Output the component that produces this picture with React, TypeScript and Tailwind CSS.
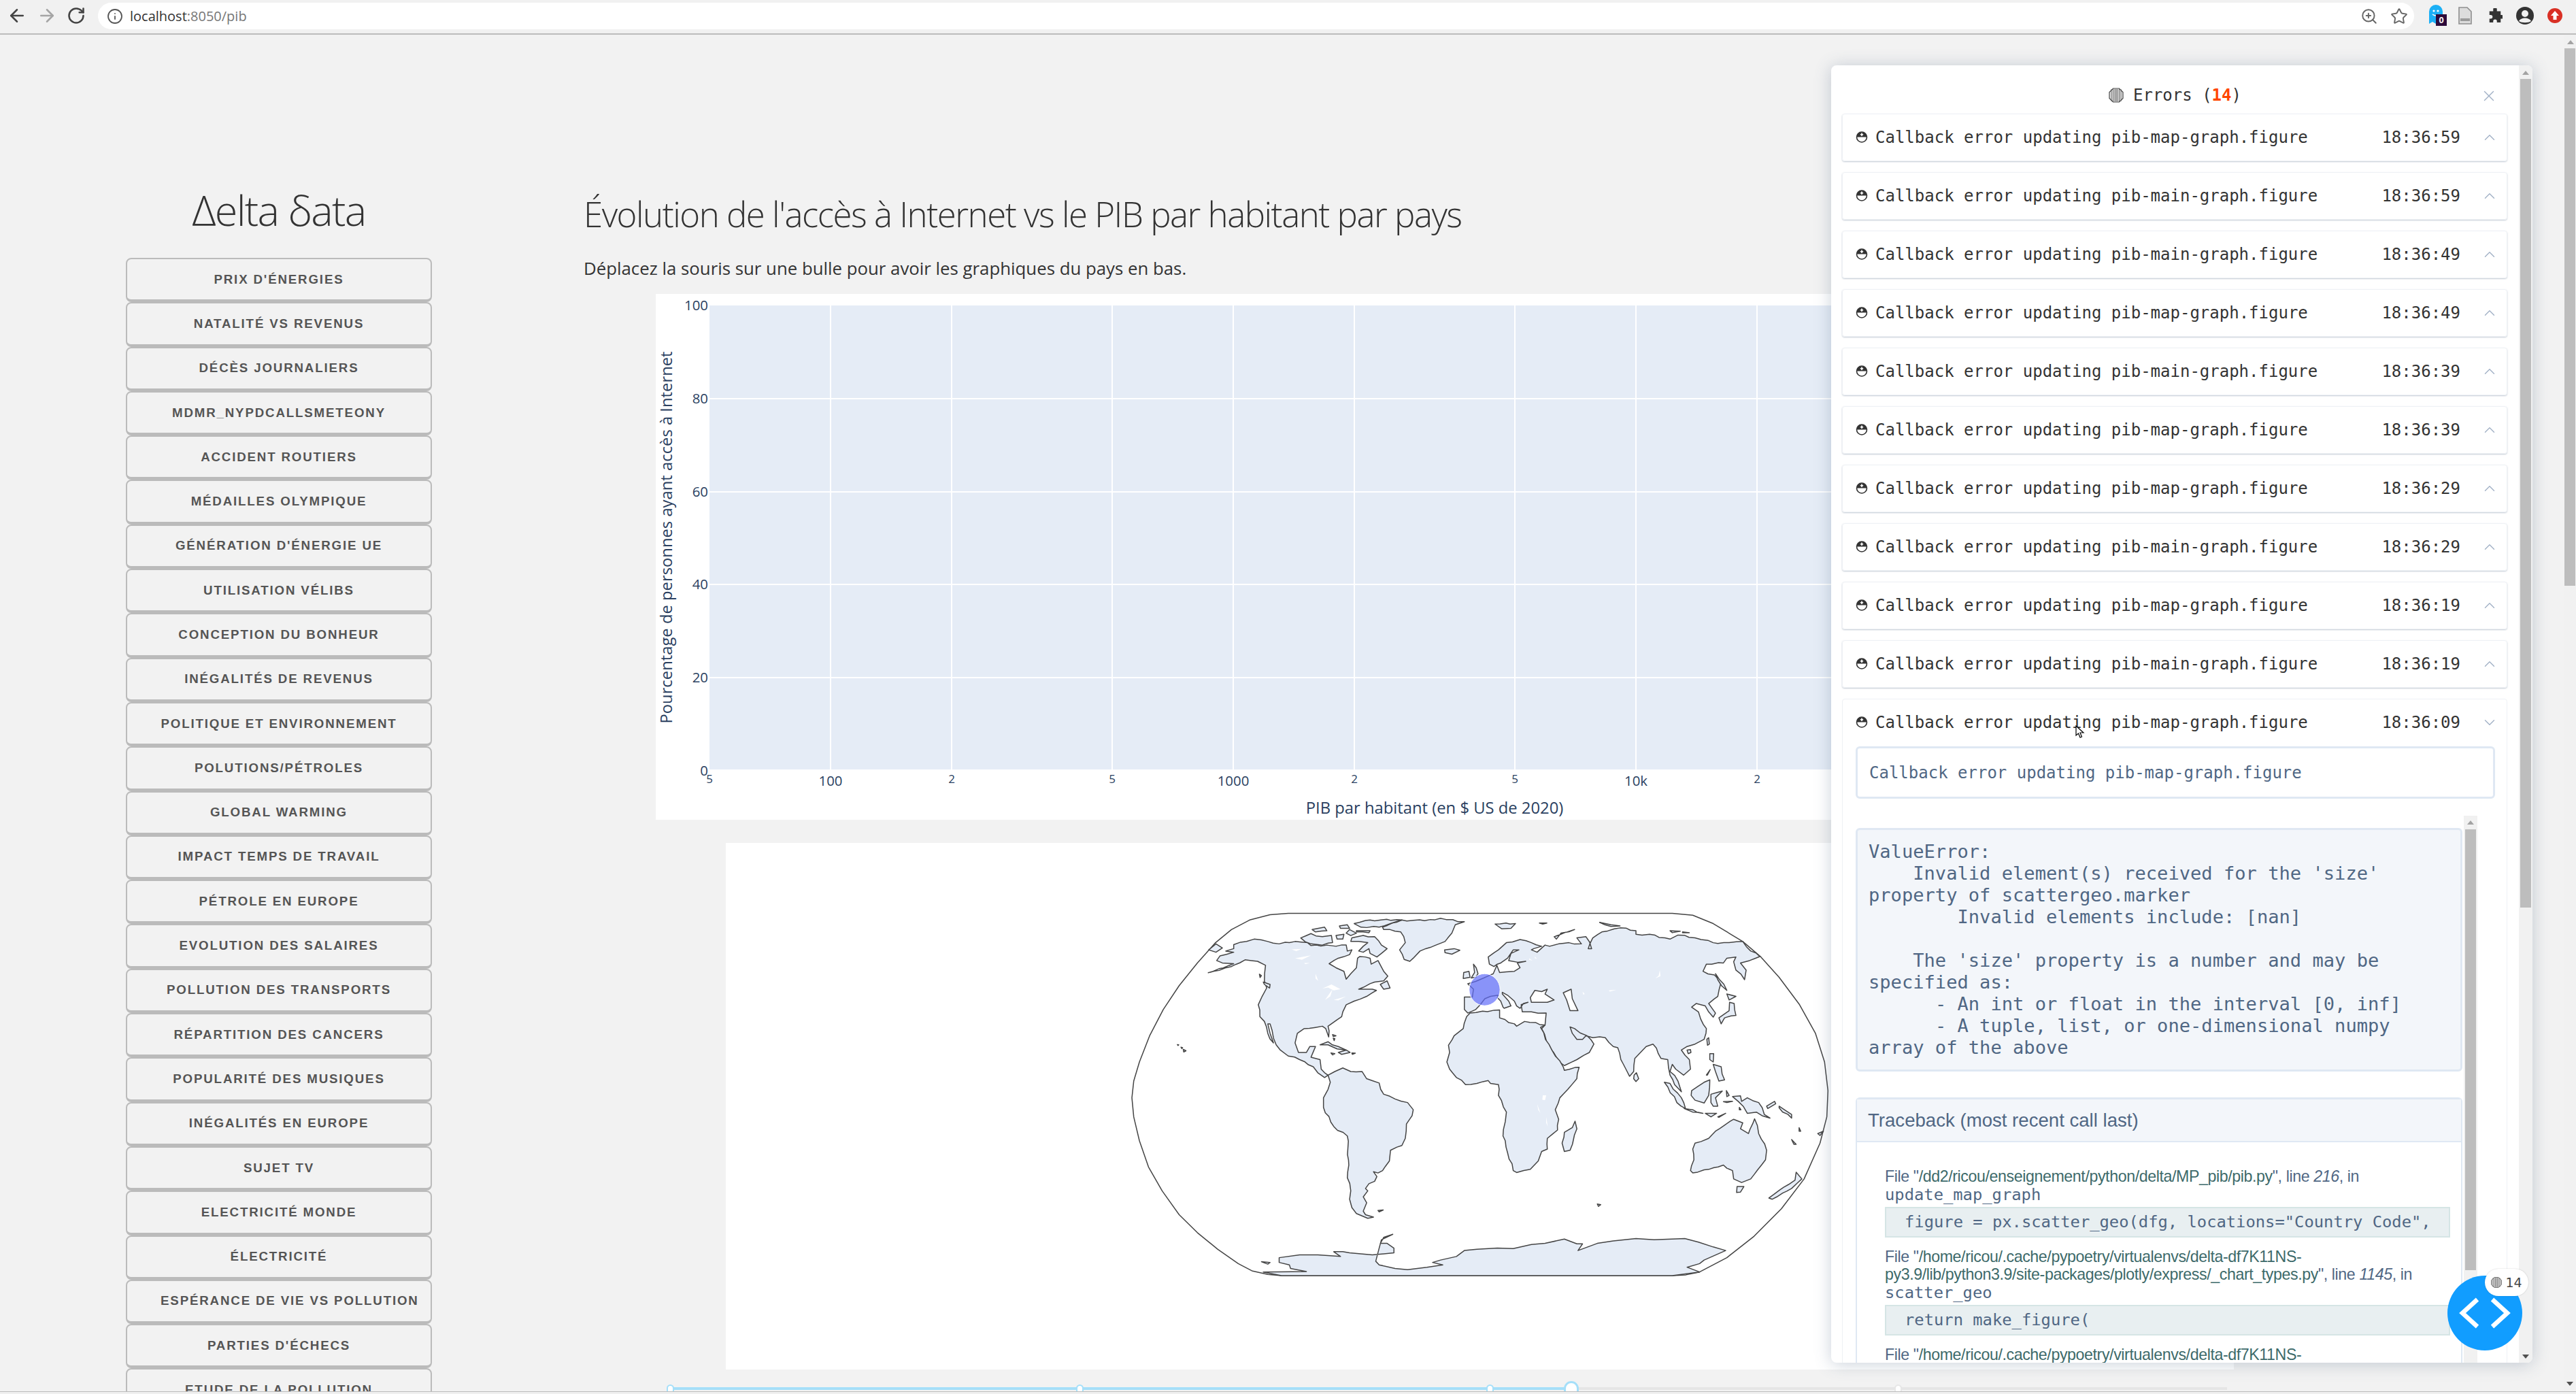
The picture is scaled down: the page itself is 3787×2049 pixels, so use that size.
import { ArrowLeft, ArrowRight, RotateCw, Info, ZoomIn, Star, ChevronUp, ChevronDown, X } from 'lucide-react';

const BOUTONS = [
  "PRIX D'ÉNERGIES", 'NATALITÉ VS REVENUS', 'DÉCÈS JOURNALIERS', 'MDMR_NYPDCALLSMETEONY', 'ACCIDENT ROUTIERS',
  'MÉDAILLES OLYMPIQUE', "GÉNÉRATION D'ÉNERGIE UE", 'UTILISATION VÉLIBS', 'CONCEPTION DU BONHEUR', 'INÉGALITÉS DE REVENUS',
  'POLITIQUE ET ENVIRONNEMENT', 'POLUTIONS/PÉTROLES', 'GLOBAL WARMING', 'IMPACT TEMPS DE TRAVAIL', 'PÉTROLE EN EUROPE',
  'EVOLUTION DES SALAIRES', 'POLLUTION DES TRANSPORTS', 'RÉPARTITION DES CANCERS', 'POPULARITÉ DES MUSIQUES', 'INÉGALITÉS EN EUROPE',
  'SUJET TV', 'ELECTRICITÉ MONDE', 'ÉLECTRICITÉ', 'ESPÉRANCE DE VIE VS POLLUTION', "PARTIES D'ÉCHECS", 'ETUDE DE LA POLLUTION',
];

const ERREURS = [
  ['map', '18:36:59'], ['main', '18:36:59'], ['main', '18:36:49'], ['map', '18:36:49'], ['main', '18:36:39'],
  ['map', '18:36:39'], ['map', '18:36:29'], ['main', '18:36:29'], ['map', '18:36:19'], ['main', '18:36:19'],
];

// le tracé de la carte : coordonnées de la moitié droite décalées de 1560
const d = (s: string) =>
  s.trim().split(/\s+/).map((p) => {
    const [x, y] = p.split(',');
    return `${Number(x) + 1560},${y}`;
  }).join(' ');

// casse les longs segments pour donner une côte irrégulière (toujours le même résultat)
const cote = (s: string) => {
  const pts = s.trim().split(/\s+/).map((p) => p.split(',').map(Number));
  const out: string[] = [];
  pts.forEach(([x, y], i) => {
    const [nx, ny] = pts[(i + 1) % pts.length];
    out.push(`${x},${y}`);
    const n = Math.floor(Math.hypot(nx - x, ny - y) / 22);
    for (let k = 1; k < n; k++) {
      const t = k / n;
      const g = ((k * 7 + i * 3) % 5) - 2;
      out.push(`${(x + (nx - x) * t + g * 1.6).toFixed(1)},${(y + (ny - y) * t - g * 1.6).toFixed(1)}`);
    }
  });
  return out.join(' ');
};

const TERRES_G = [
  '490,158 520,148 580,135 640,145 690,155 760,145 815,150 830,162 900,160 940,165 985,160 990,185 1010,180 1000,200 950,215 910,238 940,255 975,270 985,303 1005,280 1030,255 1035,215 1045,208 1090,215 1095,240 1125,225 1150,270 1168,290 1150,310 1110,315 1040,345 1100,345 1118,350 1075,375 1020,395 985,410 970,440 965,460 920,490 905,500 908,545 895,510 880,500 850,505 800,510 770,530 760,570 775,610 810,610 825,585 850,585 830,630 870,640 875,680 890,695 905,705 890,715 860,695 840,670 780,640 730,625 695,600 665,550 650,490 640,490 650,530 665,570 640,530 625,480 605,460 598,410 615,375 635,340 625,310 630,245 595,228 540,222 480,250 378,276 470,245 490,238 440,235 415,225 430,205 490,190 455,185 490,175',
  '1145,85 1230,55 1330,58 1400,48 1505,62 1465,75 1450,110 1420,145 1380,160 1310,185 1280,215 1265,228 1240,220 1220,180 1245,150 1225,105 1150,95',
  '1418,180 1460,175 1485,182 1450,198 1420,192',
  '1010,130 1060,120 1110,125 1140,160 1165,175 1140,195 1120,210 1090,195 1085,175 1060,190 1040,185 1060,165 1080,150 1040,145 1005,145',
  '785,130 830,112 880,125 920,120 925,150 880,160 830,155',
  '1020,70 1090,55 1230,55 1180,70 1130,85 1050,85',
  '835,95 890,85 900,100 850,105', '955,80 990,75 1000,90 960,90', '1030,100 1090,100 1085,108 1030,105',
  '940,120 975,115 970,135 945,135', '1000,95 1030,110 1005,120 985,110', '380,180 412,155 440,172 412,190',
  '1135,325 1165,310 1178,340 1150,345', '870,578 905,565 950,585 985,600 945,595 905,578', '950,610 985,600 1002,610 965,618',
  '918,612 935,615 925,620', '1010,612 1025,613 1012,618', '620,315 650,325 648,340 625,325', '603,282 612,288 606,296',
  '242,577 248,578 245,581', '258,588 265,590 262,594', '268,597 280,603 270,608',
  '925,535 940,540 928,543', '928,550 935,552 932,560',
  '905,705 935,690 970,675 1005,690 1055,690 1075,720 1130,738 1150,785 1200,805 1255,820 1280,850 1275,875 1250,910 1245,970 1230,1000 1180,1020 1175,1065 1145,1105 1125,1115 1105,1110 1120,1130 1110,1150 1085,1160 1070,1180 1080,1190 1060,1215 1075,1240 1060,1275 1070,1290 1105,1300 1080,1305 1030,1285 1010,1260 1000,1225 1005,1190 990,1135 995,1060 990,960 930,920 885,840 885,800 905,765 915,735',
  '1125,1272 1148,1270 1130,1278', '612,1487 650,1490 640,1497',
];

const TERRES_D = [
  // Eurasie
  '-55,378 -20,378 -15,345 -40,322 -5,312 30,298 72,280 88,245 100,275 130,272 165,270 190,255 178,235 215,228 180,232 140,225 150,195 185,180 160,180 135,215 105,235 90,240 75,250 55,240 50,210 95,180 130,150 190,137 240,150 285,165 250,175 240,180 265,190 300,160 320,165 360,155 405,150 460,155 440,130 480,125 505,175 490,175 510,130 550,105 630,88 700,100 700,115 760,115 850,135 885,118 960,130 1040,150 1110,150 1170,145 1205,185 1245,208 1200,225 1160,235 1185,265 1178,305 1140,265 1130,230 1140,210 1100,215 1085,235 1010,240 995,270 1045,285 1075,315 1060,375 1020,405 1050,445 1040,462 1020,440 1005,415 965,405 945,420 975,440 985,470 1010,510 1000,555 960,575 925,585 900,600 935,640 940,680 910,705 875,680 860,660 850,690 885,730 900,775 870,745 850,705 840,640 810,635 775,575 745,585 695,635 690,690 672,710 645,660 620,590 600,585 565,548 510,548 480,540 465,555 440,555 420,530 410,503 430,510 485,540 515,575 495,610 440,640 385,665 350,630 320,590 285,510 300,495 305,445 240,440 200,440 195,410 225,400 205,405 190,425 175,415 165,395 135,370 112,358 112,365 140,395 150,415 120,425 115,420 105,395 90,380 95,370 60,375 35,385 15,410 -5,430 -40,445 -55,430',
  // Afrique
  '-30,445 100,432 100,465 165,490 175,500 210,480 300,495 280,505 330,600 380,670 385,685 450,672 440,720 400,765 365,800 345,850 360,890 355,935 310,970 310,1015 285,1025 270,1065 235,1100 175,1113 160,1105 135,1030 115,960 125,900 130,860 95,790 95,745 60,740 50,728 0,740 -50,745 -90,715 -120,680 -132,650 -120,610 -125,580 -100,540 -60,510 -45,460',
  '-15,240 -3,255 5,280 -5,295 -25,298 -10,275', '-58,275 -35,270 -30,295 -60,300',
  '432,898 440,930 410,1020 385,1025 375,990 385,945 420,925',
  '950,1015 960,990 1020,970 1050,940 1090,915 1130,890 1170,905 1160,930 1195,950 1222,888 1240,950 1275,1020 1270,1060 1205,1140 1165,1155 1130,1140 1125,1105 1100,1095 1085,1082 1020,1100 950,1115 940,1105 955,1060',
  '1145,1172 1175,1172 1160,1195 1143,1197', '1285,1220 1350,1175 1400,1145 1405,1112 1430,1140 1385,1180 1300,1225',
  '692,705 702,695 712,720 700,732 690,720', '1012,555 1020,548 1023,575 1015,580', '925,600 940,598 942,610 930,615',
  '1065,465 1110,435 1112,400 1132,405 1140,455 1090,465 1075,490', '1100,365 1140,375 1110,390', '1050,280 1100,350 1060,305',
  '1025,615 1042,615 1040,650 1025,640', '1040,660 1075,670 1090,725 1065,730 1050,690', '1010,705 1027,682 1014,705',
  '945,770 1000,735 1025,725 1020,790 1000,822 960,810 943,790', '1030,785 1080,772 1050,800 1060,835 1040,835 1030,820',
  '825,735 850,740 900,800 918,845 880,820', '912,845 950,850 995,865 950,860', '1005,865 1055,865 1030,880', '1060,880 1095,865 1065,882',
  '1085,816 1125,815 1100,820', '1098,770 1110,790 1100,795',
  '1125,795 1160,792 1165,815 1190,800 1240,820 1265,870 1290,885 1255,875 1230,860 1190,865 1150,815',
  '1330,835 1385,870 1385,885 1330,842', '1275,835 1310,815 1315,825 1280,845', '1418,925 1425,940 1418,940', '1385,975 1405,995 1395,995', '1500,950 1525,940 1510,958',
  '530,1245 545,1248 535,1255', '80,72 170,70 150,90 110,92', '275,68 308,68 290,72', '340,125 430,95 370,110 350,135',
  '540,65 590,75 630,80 590,82', '850,100 895,102 860,108', '905,105 935,108 905,108', '1155,840 1162,850 1155,850',
];

const BLANCS_G = [
  '745,178 790,176 765,185', '760,215 830,203 790,222', '800,235 825,235 805,240', '850,280 862,310 850,300',
  '880,342 920,325 960,345 930,350 905,338', '892,390 925,345 915,375', '930,390 985,375 950,392',
];
const BLANCS_D = [
  '380,360 415,345 420,385 445,435 410,435 395,390', '235,380 255,350 285,355 310,345 300,365 340,390 310,400 240,400',
  '290,790 305,790 300,810 288,808', '265,825 280,865 270,850', '305,880 312,920 305,905', '805,265 808,290 785,300 800,288',
  '580,350 615,347 585,355', '465,355 475,365 468,368', '230,215 245,225 230,222', '255,208 265,218 255,215',
];

const CONTOUR = `730,27 650,33 560,55 480,95 410,150 330,235 250,330 180,430 120,540 75,650 50,730 42,800 50,880 75,980 115,1090 175,1190 250,1290 330,1365 420,1435 510,1495 570,1525 640,1540 700,1545 ${d('860,1545 920,1542 980,1530 1100,1470 1220,1380 1340,1265 1440,1140 1510,990 1540,880 1545,770 1530,650 1490,530 1420,410 1330,295 1250,210 1170,145 1040,70 950,35 860,27')}`;

const Carte = () => (
  <svg width="1045" height="550" viewBox="0 0 3128 1568" preserveAspectRatio="none" className="ml-[583px] mt-[94px]">
    <g strokeLinejoin="round" fill="#e5ecf6" stroke="#444" strokeWidth="1.5">
      <polygon points={CONTOUR} fill="#fff" vectorEffect="non-scaling-stroke" />
      <polygon
        vectorEffect="non-scaling-stroke"
        points={`620,1530 810,1528 740,1515 735,1500 690,1490 690,1470 780,1458 860,1458 960,1465 930,1445 970,1445 1000,1450 1100,1458 1195,1450 1195,1430 1165,1410 1135,1410 1150,1385 1190,1372 1140,1395 1130,1430 1115,1485 1130,1500 1200,1515 1255,1520 1340,1510 1410,1500 1365,1490 1400,1480 1470,1465 1505,1440 1560,1435 ${d('90,1430 160,1432 240,1415 300,1410 385,1392 440,1412 465,1412 445,1440 530,1410 600,1400 700,1390 780,1395 915,1390 975,1405 1040,1425 1095,1440 1000,1480 980,1495 925,1510 980,1530 860,1545')} 700,1545`}
      />
      {TERRES_G.map((p, i) => <polygon key={i} points={cote(p)} vectorEffect="non-scaling-stroke" />)}
      {TERRES_D.map((p, i) => <polygon key={i} points={cote(d(p))} vectorEffect="non-scaling-stroke" />)}
      {BLANCS_D.slice(0, 2).map((p, i) => <polygon key={i} points={d(p)} fill="#fff" vectorEffect="non-scaling-stroke" />)}
    </g>
    <g fill="#fff" stroke="none">
      {BLANCS_G.map((p, i) => <polygon key={i} points={p} />)}
      {BLANCS_D.slice(2).map((p, i) => <polygon key={i} points={d(p)} />)}
    </g>
    <ellipse cx="1594" cy="347" rx="68" ry="67" fill="#636efa" fillOpacity="0.7" stroke="#fff" strokeWidth="1" vectorEffect="non-scaling-stroke" />
  </svg>
);

const Graphique = () => {
  const ys = [[100, 451], [80, 588], [60, 725], [40, 861], [20, 998], [0, 1135]];
  const grands = [[1221, '100'], [1813, '1000'], [2405, '10k']] as const;
  const petits = [[1043, '5'], [1399, '2'], [1635, '5'], [1991, '2'], [2227, '5'], [2583, '2']] as const;
  return (
    <svg viewBox="964 434 2320 773" width="2320" height="773" fontFamily="'Open Sans', sans-serif" fill="#2a3f5f">
      <rect x="1043" y="451" width="2132" height="682" fill="#e5ecf6" />
      {ys.slice(1, 5).map(([v, y]) => <rect key={v} x="1043" y={y - 1} width="2132" height="2" fill="#fff" />)}
      {[...grands, ...petits].slice(0, 9).filter(([x]) => x !== 1043).map(([x]) => <rect key={x} x={x - 1} y="451" width="2" height="682" fill="#fff" />)}
      {ys.map(([v, y]) => <text key={v} x="1041" y={y + 7} textAnchor="end" fontSize="20.4">{v}</text>)}
      {grands.map(([x, t]) => <text key={t} x={x} y="1157" textAnchor="middle" fontSize="20.4">{t}</text>)}
      {petits.map(([x, t]) => <text key={x} x={x} y="1153" textAnchor="middle" fontSize="17">{t}</text>)}
      <text x="2109" y="1198" textAnchor="middle" fontSize="23.8">PIB par habitant (en $ US de 2020)</text>
      <text transform="translate(988 792) rotate(-90)" textAnchor="middle" fontSize="23.8">Pourcentage de personnes ayant accès à Internet</text>
    </svg>
  );
};

const Octogone = ({ s }: { s: number }) => (
  <svg width={s} height={s} viewBox="0 0 22 22" className="shrink-0">
    <polygon points="6.5,1 15.5,1 21,6.5 21,15.5 15.5,21 6.5,21 1,15.5 1,6.5" fill="#e8e8e8" stroke="#444" strokeWidth="1.2" />
    {[4, 6.5, 9, 11, 13, 15.5, 18].map((x) => <line key={x} x1={x} x2={x} y1="2" y2="20" stroke="#555" strokeWidth="0.9" />)}
  </svg>
);

const Pastille = () => (
  <svg width="18" height="18" viewBox="0 0 18 18" className="shrink-0 -mt-[3px]">
    <circle cx="9" cy="9.5" r="7.5" fill="#fff" stroke="#333" strokeWidth="1.6" />
    <path d="M1.5 9.5 A7.5 7.5 0 0 1 16.5 9.5 Z" fill="#333" />
    <path d="M9 3.5 V8 M6.8 5.8 H11.2" stroke="#fff" strokeWidth="1.6" />
  </svg>
);

const LigneErreur = ({ quoi, heure, ouvert }: { quoi: string; heure: string; ouvert?: boolean }) => (
  <div className="flex items-center h-[68px] pl-[19px] pr-[12px] text-[24px] text-[#333]">
    <Pastille />
    <span className="ml-[11px] whitespace-nowrap">Callback error updating pib-{quoi}-graph.figure</span>
    <span className="ml-auto mr-[30px] whitespace-nowrap">{heure}</span>
    {ouvert ? <ChevronDown className="w-[26px] h-[26px] text-[#a2b1c6]" strokeWidth={1.3} /> : <ChevronUp className="w-[26px] h-[26px] text-[#a2b1c6]" strokeWidth={1.3} />}
  </div>
);

const Fichier = ({ lignes, n, mono, code }: { lignes: string[]; n?: string; mono?: string; code?: string }) => (
  <div className="mb-[15px]">
    <div className="text-[23.2px] leading-[26px] tracking-[-0.4px] text-[#506784] w-[790px]">
      File "<span className="text-[#3d6a6a]">{lignes[0]}</span>
      {lignes[1] && <><br /><span className="text-[#3d6a6a]">{lignes[1]}</span></>}
      {n && <>", line <i>{n}</i>, in</>}
    </div>
    {mono && <div className="font-['DejaVu_Sans_Mono',monospace] text-[23.8px] leading-[28px] text-[#506784] whitespace-nowrap">{mono}</div>}
    {code && (
      <div className="mt-[4px] h-[45px] flex items-center pl-[27px] bg-[#e8eff1] border-2 border-[#d5e5e5] font-['DejaVu_Sans_Mono',monospace] text-[23.8px] text-[#506784] whitespace-nowrap overflow-hidden">
        {code}
      </div>
    )}
  </div>
);

const PanneauErreurs = () => (
  <div className="absolute left-[2692px] top-[96px] w-[1031px] h-[1907px] bg-white rounded-[8px] overflow-hidden shadow-[0_2px_24px_rgba(80,103,132,0.3)] font-['DejaVu_Sans_Mono',monospace]">
    <div className="relative h-[71px] flex items-center justify-center gap-[14px] pt-[16px] pl-[17px] pr-[37px] text-[24px] text-[#333]">
      <Octogone s={22} />
      <span>Errors (<b className="text-[#ff4500]">14</b>)</span>
      <X className="absolute left-[954px] top-[32px] w-[26px] h-[26px] text-[#a2b1c6]" strokeWidth={1.3} />
    </div>
    <div className="ml-[16px] w-[978px]">
      {ERREURS.map(([q, h], i) => (
        <div key={i} className="h-[70px] mb-[16px] rounded-[4px] border border-[#eef1f5] shadow-[0_1px_2px_rgba(80,103,132,0.35)]">
          <LigneErreur quoi={q} heure={h} />
        </div>
      ))}
      <div className="rounded-[4px] border border-[#eef1f5] h-[1100px]">
        <LigneErreur quoi="map" heure="18:36:09" ouvert />
        <div className="mt-[1px] ml-[19px] w-[940px] h-[77px] flex items-center pl-[17px] rounded-[6px] border-[3px] border-[#dfe8f3] text-[24px] text-[#506784]">
          Callback error updating pib-map-graph.figure
        </div>
        <div className="relative ml-[19px] w-[914px] mt-[25px] pt-[18px] h-[900px]">
          <pre className="w-[892px] h-[358px] pl-[16px] pt-[16px] rounded-[6px] border-[3px] border-[#dfe8f3] bg-[#f3f6fa] text-[27.1px] leading-[32px] text-[#506784] font-['DejaVu_Sans_Mono',monospace] whitespace-pre-wrap">
{`ValueError:
    Invalid element(s) received for the 'size'
property of scattergeo.marker
        Invalid elements include: [nan]

    The 'size' property is a number and may be
specified as:
      - An int or float in the interval [0, inf]
      - A tuple, list, or one-dimensional numpy
array of the above`}
          </pre>
          <div className="mt-[38px] w-[892px] h-[500px] border-x-[2px] border-[#dfe8f3] rounded-t-[6px] overflow-hidden">
            <div className="h-[66px] flex items-center pl-[16px] bg-[#f3f6fa] border-t-[3px] border-b-[2px] border-[#dfe8f3] font-['Liberation_Sans',sans-serif] text-[27.6px] text-[#506784]">
              Traceback (most recent call last)
            </div>
            <div className="pt-[37px] pl-[41px] pr-[16px] font-['Liberation_Sans',sans-serif]">
              <Fichier lignes={['/dd2/ricou/enseignement/python/delta/MP_pib/pib.py']} n="216" mono="update_map_graph" code={'figure = px.scatter_geo(dfg, locations="Country Code",'} />
              <Fichier lignes={['/home/ricou/.cache/pypoetry/virtualenvs/delta-df7K11NS-', 'py3.9/lib/python3.9/site-packages/plotly/express/_chart_types.py']} n="1145" mono="scatter_geo" code="return make_figure(" />
              <Fichier lignes={['/home/ricou/.cache/pypoetry/virtualenvs/delta-df7K11NS-']} />
            </div>
          </div>
          <div className="absolute left-[894px] top-0 w-[20px] h-[820px] bg-[#f1f1f1]">
            <div className="mx-auto mt-[7px] w-0 h-0 border-x-[5px] border-x-transparent border-b-[6px] border-b-[#a3a3a3]" />
            <div className="mt-[7px] ml-[2px] w-[16px] h-[648px] bg-[#bdbdbd]" />
          </div>
        </div>
      </div>
    </div>
    {/* ascenseur du panneau */}
    <div className="absolute right-0 top-0 w-[20px] h-full bg-[#f1f1f1]">
      <div className="mx-auto mt-[8px] w-0 h-0 border-x-[5px] border-x-transparent border-b-[6px] border-b-[#a3a3a3]" />
      <div className="mt-[6px] ml-[2px] w-[16px] h-[1218px] bg-[#bdbdbd]" />
      <div className="absolute bottom-[6px] left-[5px] w-0 h-0 border-x-[5px] border-x-transparent border-t-[6px] border-t-[#505050]" />
    </div>
  </div>
);

const BarreNavigateur = () => (
  <div className="h-[51px] shrink-0 flex items-start bg-[#f1f1f1] border-b-2 border-[#bcbcbc] pl-[10px] pr-[14px]">
    <div className="flex items-center h-[46px] gap-[14px] w-[134px] text-[#444]">
      <ArrowLeft className="w-[30px] h-[30px]" strokeWidth={2} />
      <ArrowRight className="w-[30px] h-[30px] text-[#a5a5a5]" strokeWidth={2} />
      <RotateCw className="w-[28px] h-[28px]" strokeWidth={2.2} />
    </div>
    <div className="mt-[4px] w-[3405px] h-[39px] bg-white rounded-full flex items-center pl-[13px] pr-[9px] font-['Open_Sans',sans-serif] text-[20px]">
      <Info className="w-[24px] h-[24px] text-[#555]" strokeWidth={1.8} />
      <span className="ml-[10px] text-[#333]">localhost</span>
      <span className="text-[#777]">:8050/pib</span>
      <ZoomIn className="ml-auto w-[26px] h-[26px] text-[#666]" strokeWidth={1.8} />
      <Star className="ml-[18px] w-[26px] h-[26px] text-[#666]" strokeWidth={1.8} />
    </div>
    <div className="flex items-center h-[46px] ml-[21px]">
      <div className="relative w-[26px] h-[36px]">
        <svg width="22" height="32" viewBox="0 0 22 32">
          <path d="M1 12 A10 10 0 0 1 21 12 V30 L16 27 L11 30 L6 27 L1 30 Z" fill="#1cb0f6" />
          <circle cx="8" cy="11" r="1.6" fill="#fff" /><circle cx="14" cy="11" r="1.6" fill="#fff" />
          <path d="M6 16 Q11 20 16 16" stroke="#fff" strokeWidth="1.4" fill="none" />
        </svg>
        <div className="absolute left-[11px] top-[16px] w-[16px] h-[17px] bg-[#2c0a3a] text-white text-[13px] font-bold text-center leading-[17px] font-['Liberation_Sans',sans-serif]">0</div>
      </div>
      <svg width="22" height="26" viewBox="0 0 22 26" className="ml-[17px]">
        <path d="M2 1 H14 L20 7 V25 H2 Z" fill="#dcdcdc" stroke="#8e8e8e" strokeWidth="1.6" />
        <rect x="4" y="17" width="14" height="4" fill="#9a9a9a" />
      </svg>
      <svg width="22" height="22" viewBox="0 0 24 24" className="ml-[22px]">
        <path d="M9 2 a3 3 0 0 1 6 0 V5 H21 V11 H23 a3 3 0 0 1 0 6 H21 V23 H15 V21 a3 3 0 0 0 -6 0 V23 H3 V17 H5 a3 3 0 0 0 0 -6 H3 V5 H9 Z" fill="#333" />
      </svg>
      <svg width="26" height="26" viewBox="0 0 26 26" className="ml-[20px]">
        <circle cx="13" cy="13" r="13" fill="#333" />
        <circle cx="13" cy="10" r="5" fill="#f1f1f1" />
        <path d="M4 21 C7 15 19 15 22 21 C18 24 8 24 4 21 Z" fill="#f1f1f1" />
      </svg>
      <svg width="22" height="22" viewBox="0 0 22 22" className="ml-[20px]">
        <circle cx="11" cy="11" r="11" fill="#d93025" />
        <path d="M11 4 L17 11 H13.5 V17 H8.5 V11 H5 Z" fill="#fff" />
      </svg>
    </div>
  </div>
);

const Curseur = () => (
  <svg width="14" height="20" viewBox="0 0 14 20" className="absolute left-[3051px] top-[1066px]">
    <path d="M1 1 V15 L4.5 12 L7 18 L9.5 17 L7 11 H12 Z" fill="#fff" stroke="#000" strokeWidth="1.2" />
  </svg>
);

export default function App() {
  return (
    <div className="relative w-[3787px] h-[2049px] overflow-hidden flex flex-col bg-[#f2f2f2]">
      <BarreNavigateur />
      <div className="flex h-[1994px] overflow-hidden">
        {/* MENU */}
        <div className="w-[858px] shrink-0 pl-[185px]">
          <div className="w-[450px] h-[328px] flex items-end justify-center pb-[40px] font-['Open_Sans',sans-serif] font-light text-[61.2px] leading-none tracking-[-1.7px] text-[#333] whitespace-nowrap">
            Δelta δata
          </div>
          {BOUTONS.map((b) => (
            <div key={b} className="w-[450px] h-[65.3px] shrink-0 flex items-center rounded-[8px] border-2 border-b-[4px] border-[#bbb] px-[49px] font-['Liberation_Sans',sans-serif] font-bold text-[18.7px] tracking-[1.85px] text-[#555] whitespace-nowrap">
              <span className="min-w-full text-center">{b}</span>
            </div>
          ))}
        </div>
        {/* CONTENU */}
        <div className="flex-1 font-['Open_Sans',sans-serif]">
          <h1 className="mt-[223px] text-[51px] leading-[80px] font-light tracking-[-1.5px] text-[#333] whitespace-nowrap">
            Évolution de l'accès à Internet vs le PIB par habitant par pays
          </h1>
          <p className="mt-[24px] text-[25.8px] leading-[32px] text-[#333] whitespace-nowrap">
            Déplacez la souris sur une bulle pour avoir les graphiques du pays en bas.
          </p>
          <div className="mt-[22px] ml-[106px] w-[2320px] h-[773px] bg-white">
            <Graphique />
          </div>
          <div className="mt-[34px] ml-[209px] w-[2217px] h-[774px] bg-white overflow-hidden">
            <Carte />
          </div>
          {/* curseur de temps */}
          <div className="relative mt-[26px] ml-[127px] w-[2289px] h-[4px] bg-[#e6e6e6]">
            <div className="w-[1314px] h-full bg-[#a5dff9]" />
            <div className="absolute left-[-5px] top-[-4px] w-[11px] h-[14px] rounded-full bg-white border-2 border-[#a5dff9]" />
            <div className="absolute left-[597px] top-[-4px] w-[11px] h-[14px] rounded-full bg-white border-2 border-[#a5dff9]" />
            <div className="absolute left-[1200px] top-[-4px] w-[11px] h-[14px] rounded-full bg-white border-2 border-[#a5dff9]" />
            <div className="absolute left-[1314px] top-[-9px] w-[22px] h-[26px] rounded-full bg-white border-[3px] border-[#a5dff9]" />
            <div className="absolute left-[1800px] top-[-4px] w-[11px] h-[14px] rounded-full bg-white border-2 border-[#e6e6e6]" />
          </div>
        </div>
      </div>
      {/* bas de fenêtre */}
      <div className="h-[4px] bg-[#f0f0f0] border-t border-[#bcbcbc]" />

      {/* ascenseur de la page */}
      <div className="absolute left-[3770px] top-[51px] w-[17px] h-[1994px] bg-[#f1f1f1]">
        <div className="mx-auto mt-[8px] w-0 h-0 border-x-[5px] border-x-transparent border-b-[6px] border-b-[#a3a3a3]" />
        <div className="mt-[6px] w-[16px] h-[790px] bg-[#bdbdbd]" />
        <div className="absolute bottom-[8px] left-[3px] w-0 h-0 border-x-[5px] border-x-transparent border-t-[6px] border-t-[#505050]" />
      </div>

      <PanneauErreurs />
      <Curseur />

      {/* bouton des outils de debug */}
      <div className="absolute left-[3598px] top-[1875px] w-[110px] h-[110px] rounded-full bg-[#119dff] flex items-center justify-center">
        <svg width="90" height="50" viewBox="0 0 90 50" fill="none" stroke="#fff" strokeWidth="6.5">
          <polyline points="34,5 12,25 34,45" />
          <polyline points="56,5 78,25 56,45" />
        </svg>
      </div>
      <div className="absolute left-[3653px] top-[1865px] w-[64px] h-[40px] rounded-full bg-white flex items-center justify-center gap-[5px] shadow-[0_0_2px_rgba(0,0,0,0.2)] font-['DejaVu_Sans',sans-serif] text-[19px] text-[#444]">
        <Octogone s={16} />
        14
      </div>
    </div>
  );
}
